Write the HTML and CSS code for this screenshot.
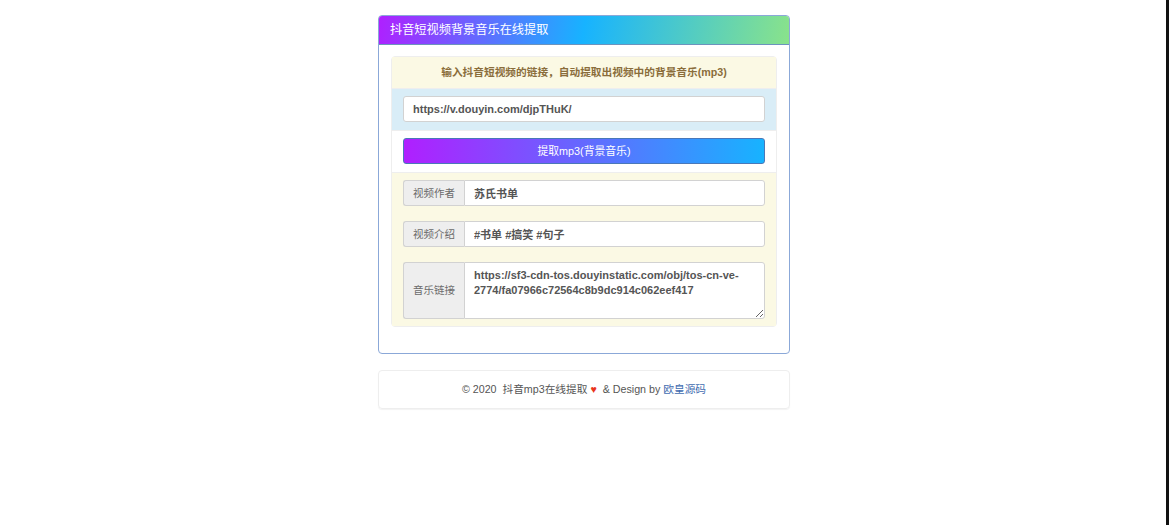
FILE: index.html
```html
<!DOCTYPE html>
<html lang="zh-CN">
  <head>
    <meta charset="UTF-8" />
    <meta name="viewport" content="width=device-width, initial-scale=1.0" />
    <title>抖音短视频背景音乐在线提取</title>
    <link rel="stylesheet" href="styles.css">
  </head>
  <body>
    <div class="scrollbar"></div>
    <div class="wrapper">
      <!-- Main panel -->
      <div class="panel">
        <div class="panel-heading">抖音短视频背景音乐在线提取</div>
        <div class="panel-body">
          <ul class="list">
            <li class="list-item item-warning item-title">输入抖音短视频的链接，自动提取出视频中的背景音乐(mp3)</li>
            <li class="list-item item-info">
              <input class="form-control" type="text" value="https://v.douyin.com/djpTHuK/" />
            </li>
            <li class="list-item item-white">
              <button class="btn-extract" type="button">提取mp3(背景音乐)</button>
            </li>
            <li class="list-item item-warning item-result">
              <div class="input-group">
                <span class="addon">视频作者</span>
                <input class="form-control" type="text" value="苏氏书单" />
              </div>
              <div class="input-group">
                <span class="addon">视频介绍</span>
                <input class="form-control" type="text" value="#书单 #搞笑 #句子" />
              </div>
              <div class="input-group">
                <span class="addon">音乐链接</span>
                <textarea class="form-control music-url">https://sf3-cdn-tos.douyinstatic.com/obj/tos-cn-ve-2774/fa07966c72564c8b9dc914c062eef417</textarea>
              </div>
            </li>
          </ul>
        </div>
      </div>

      <!-- Footer -->
      <div class="footer">
        © 2020 &nbsp;抖音mp3在线提取 <span class="heart">♥</span> &nbsp;&amp; Design by <a href="#">欧皇源码</a>
      </div>
    </div>
  </body>
</html>
```

FILE: styles.css
```css
html,
body {
  height: 100%;
}
body {
  margin: 0;
  padding: 15px 1px 0 0;
  box-sizing: border-box;
  background-color: #fff;
  color: #555;
  font-family: "Liberation Sans", "Noto Sans CJK SC", sans-serif;
  font-size: 10.7px;
  overflow: hidden;
}
.scrollbar {
  position: fixed;
  top: 0;
  right: 0;
  bottom: 0;
  width: 3px;
  background-color: #111;
}
.wrapper {
  width: 412px;
  margin: 0 auto;
}
.panel {
  box-sizing: border-box;
  height: 339px;
  border: 1px solid #8ba8d8;
  border-radius: 4px;
  overflow: hidden;
}
.panel-heading {
  box-sizing: border-box;
  height: 30px;
  margin: -1px -1px 0;
  padding: 0 12px;
  line-height: 30px;
  font-size: 12.2px;
  color: #fff;
  background: linear-gradient(100deg, #b01fff 0%, #17b3ff 50%, #8ae38a 100%);
  border-bottom: 1px solid #6c93bd;
}
.panel-body {
  padding: 11px 12px;
}
.list {
  list-style: none;
  margin: 0;
  padding: 0;
  border: 1px solid #eee;
  border-radius: 4px;
}
.list-item {
  box-sizing: border-box;
  padding: 7px 11px;
  border-bottom: 1px solid #eee;
}
.list-item:last-child {
  border-bottom: none;
}
.item-warning {
  background-color: #fbf9e4;
}
.item-info {
  background-color: #d9edf7;
  height: 42px;
}
.item-white {
  background-color: #fff;
  height: 42px;
}
.item-title {
  height: 32px;
  text-align: center;
  font-weight: bold;
  line-height: 17px;
  color: #8a6d3b;
}
.item-result {
  padding-bottom: 7px;
}
.form-control {
  display: block;
  box-sizing: border-box;
  width: 100%;
  height: 26px;
  margin: 0;
  padding: 0 9px;
  border: 1px solid #d2d2d2;
  border-radius: 3px;
  background-color: #fff;
  color: #555;
  font-family: inherit;
  font-size: 11px;
  font-weight: bold;
  outline: none;
}
.btn-extract {
  display: block;
  width: 100%;
  height: 26px;
  padding: 0 0 2px;
  border: 1px solid #4a78b8;
  border-radius: 3px;
  background: linear-gradient(90deg, #b01fff 0%, #17b3ff 100%);
  color: #fff;
  font-family: inherit;
  font-size: 10.8px;
}
.input-group {
  display: flex;
  margin-bottom: 15px;
}
.input-group:last-child {
  margin-bottom: 0;
}
.addon {
  flex: 0 0 61px;
  box-sizing: border-box;
  display: flex;
  align-items: center;
  justify-content: center;
  padding-bottom: 2px;
  border: 1px solid #d2d2d2;
  border-right: none;
  border-radius: 3px 0 0 3px;
  background-color: #eee;
  color: #6b6b6b;
  font-size: 10.5px;
}
.input-group .form-control {
  flex: 1;
  width: auto;
  border-radius: 0 3px 3px 0;
}
.music-url {
  height: 57px;
  padding: 5px 9px;
  line-height: 15px;
}
.footer {
  box-sizing: border-box;
  height: 39px;
  margin-top: 16px;
  border: 1px solid #eee;
  border-radius: 4px;
  box-shadow: 0 1px 1px rgba(0, 0, 0, 0.05);
  text-align: center;
  line-height: 37px;
  color: #555;
}
.heart {
  color: #e9351c;
}
.footer a {
  color: #3f6cb0;
  text-decoration: none;
}
```
